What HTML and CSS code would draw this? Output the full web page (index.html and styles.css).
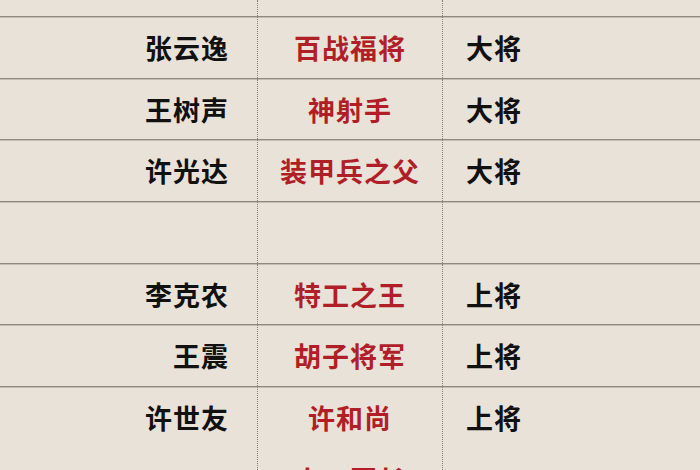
FILE: index.html
```html
<!DOCTYPE html>
<html lang="zh-CN">
<head>
<meta charset="utf-8">
<link rel="stylesheet" href="styles.css">
</head>
<body>
<div class="table">
  <div class="row top"><div class="c name"></div><div class="c nick"></div><div class="c rank"></div></div>
  <div class="row"><div class="c name">张云逸</div><div class="c nick">百战福将</div><div class="c rank">大将</div></div>
  <div class="row"><div class="c name">王树声</div><div class="c nick">神射手</div><div class="c rank">大将</div></div>
  <div class="row"><div class="c name">许光达</div><div class="c nick">装甲兵之父</div><div class="c rank">大将</div></div>
  <div class="row"><div class="c name"></div><div class="c nick"></div><div class="c rank"></div></div>
  <div class="row"><div class="c name">李克农</div><div class="c nick">特工之王</div><div class="c rank">上将</div></div>
  <div class="row"><div class="c name">王震</div><div class="c nick">胡子将军</div><div class="c rank">上将</div></div>
  <div class="row noline"><div class="c name">许世友</div><div class="c nick">许和尚</div><div class="c rank">上将</div></div>
  <div class="row noline"><div class="c name"></div><div class="c nick">大刀团长</div><div class="c rank"></div></div>
</div>
</body>
</html>
```
FILE: styles.css
```css
html, body {
  margin: 0;
  padding: 0;
  background: #e9e2d8;
  overflow: hidden;
}
.table {
  width: 700px;
  height: 470px;
  overflow: hidden;
  display: flex;
  flex-direction: column;
  font-family: "Noto Sans CJK SC", "Noto Sans", sans-serif;
  font-weight: 700;
  font-size: 27px;
  letter-spacing: 1px;
}
.row {
  display: grid;
  grid-template-columns: 257px 186px 1fr;
  height: 60.7px;
  flex: none;
  border-bottom: 1px solid #8f8981;
  box-shadow: 0 1px 0 #c4bdb3;
}
.row.top {
  height: 16px;
}
.row.noline {
  border-bottom: 1px solid transparent;
  box-shadow: none;
}
.c {
  display: flex;
  align-items: center;
  line-height: 1;
  white-space: nowrap;
}
.name {
  justify-content: flex-end;
  padding-right: 28px;
  color: #111111;
}
.nick {
  justify-content: center;
  color: #b01f28;
  border-left: 1px dotted #857f77;
  border-right: 1px dotted #857f77;
}
.rank {
  padding-left: 23px;
  color: #111111;
}
```
